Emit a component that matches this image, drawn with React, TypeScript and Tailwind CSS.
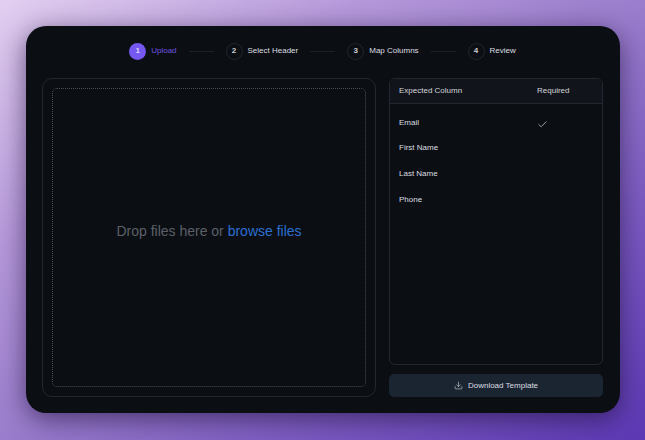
import React from 'react';
import { Check, Download } from 'lucide-react';

const steps = ['Upload', 'Select Header', 'Map Columns', 'Review'];
const columns = [
  { name: 'Email', required: true },
  { name: 'First Name', required: false },
  { name: 'Last Name', required: false },
  { name: 'Phone', required: false },
];

export default function App() {
  return (
    <div className="w-[645px] h-[440px] overflow-hidden pt-[26px] pl-[26px] bg-[linear-gradient(to_bottom_right,#e2cff0_0%,#b598da_28%,#9a7dcc_50%,#7d5cc2_72%,#5c38b4_100%)] font-['Liberation_Sans',sans-serif]">
      <div className="w-[594px] h-[387px] rounded-[20px] bg-[#0b0e13] px-4 pt-[14px] shadow-[0_6px_26px_rgba(25,12,50,0.6)] flex flex-col">
        <div className="h-[22px] flex items-center justify-center gap-[12px] pr-[1px]">
          {steps.map((step, i) => (
            <React.Fragment key={step}>
              <div className="flex items-center gap-[5px]">
                <div className={`w-[17px] h-[17px] rounded-full flex items-center justify-center text-[8px] font-bold ${i === 0 ? 'bg-[#7558f0] text-[#d8d0ff]' : 'border border-[#22262e] text-[#c9ccd2]'}`}>
                  {i + 1}
                </div>
                <span className={`text-[8px] ${i === 0 ? 'text-[#6f54e0]' : 'text-[#dcdee2]'}`}>{step}</span>
              </div>
              {i < 3 && <div className="h-px w-[25px] bg-[#1c2027]" />}
            </React.Fragment>
          ))}
        </div>

        <div className="mt-[16px] flex gap-[13px] h-[319px]">
          <div className="w-[334px] rounded-[10px] border border-[#23272f] p-[9px]">
            <div className="h-full pb-[13px] rounded-[5px] border border-dotted border-[#4a4e56] flex items-center justify-center text-[14px] text-[#5c6068]">
              <span>Drop files here or <span className="text-[#2a6fd0]">browse files</span></span>
            </div>
          </div>

          <div className="w-[214px] flex flex-col gap-[9px]">
            <div className="flex-1 rounded-[6px] border border-[#23272f] overflow-hidden">
              <div className="h-[25px] bg-[#11141b] border-b border-[#23272f] flex items-center pl-[9px] text-[8px] text-[#d4d6da]">
                <span className="w-[138px]">Expected Column</span>
                <span>Required</span>
              </div>
              <div className="pt-[6px]">
                {columns.map((c) => (
                  <div key={c.name} className="h-[25.6px] flex items-center pl-[9px] text-[8px] text-[#dcdee2]">
                    <span className="w-[138px]">{c.name}</span>
                    {c.required && <Check size={11} strokeWidth={1.5} className="text-[#d8dade] mt-[3px]" />}
                  </div>
                ))}
              </div>
            </div>
            <button className="h-[23px] rounded-[5px] bg-[#1b2532] flex items-center justify-center gap-[5px] text-[8px] text-[#dcdee2]">
              <Download size={9} strokeWidth={1.5} />
              Download Template
            </button>
          </div>
        </div>
      </div>
    </div>
  );
}
